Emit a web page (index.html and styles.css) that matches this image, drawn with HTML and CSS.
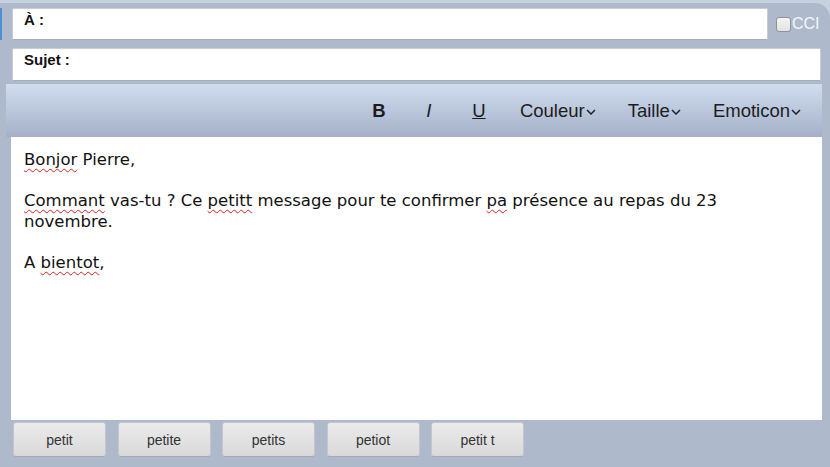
FILE: index.html
```html
<!DOCTYPE html>
<html lang="fr">
<head>
<meta charset="utf-8">
<title>Message</title>
<link rel="stylesheet" href="styles.css">
</head>
<body>
<div class="frame">
  <div class="panel">
    <div class="row row-to">
      <span class="focusbar"></span>
      <div class="field field-to"><span class="label">À :</span></div>
      <label class="cci"><span class="check"></span><span class="cci-text">CCI</span></label>
    </div>
    <div class="row row-subject">
      <div class="field field-subject"><span class="label">Sujet :</span></div>
    </div>
    <div class="toolbar">
      <span class="tool tool-b">B</span>
      <span class="tool tool-i">I</span>
      <span class="tool tool-u">U</span>
      <span class="tool menu">Couleur<svg class="chev" viewBox="0 0 10 6" width="10" height="6"><polyline points="1,1 5,5 9,1" fill="none" stroke="#222" stroke-width="1.5"/></svg></span>
      <span class="tool menu">Taille<svg class="chev" viewBox="0 0 10 6" width="10" height="6"><polyline points="1,1 5,5 9,1" fill="none" stroke="#222" stroke-width="1.5"/></svg></span>
      <span class="tool menu">Emoticon<svg class="chev" viewBox="0 0 10 6" width="10" height="6"><polyline points="1,1 5,5 9,1" fill="none" stroke="#222" stroke-width="1.5"/></svg></span>
    </div>
    <div class="editor">
      <p><span class="err">Bonjor</span> Pierre,</p>
      <p><span class="err">Commant</span> vas-tu ? Ce <span class="err">petitt</span> message pour te confirmer <span class="err">pa</span> présence au repas du 23 novembre.</p>
      <p>A <span class="err">bientot</span>,</p>
    </div>
    <div class="suggestions">
      <button class="sugg">petit</button>
      <button class="sugg">petite</button>
      <button class="sugg">petits</button>
      <button class="sugg">petiot</button>
      <button class="sugg">petit t</button>
    </div>
  </div>
</div>
</body>
</html>
```
FILE: styles.css
```css
html, body {
  margin: 0;
  padding: 0;
}
body {
  width: 830px;
  height: 467px;
  overflow: hidden;
  font-family: "Liberation Sans", Arial, sans-serif;
}
.frame {
  background: #c7d1df;
  height: 467px;
  padding-top: 3px;
  box-sizing: border-box;
}
.panel {
  background: #aebacb;
  height: 464px;
  border-top-right-radius: 15px;
  padding-top: 5px;
  box-sizing: border-box;
}
.row {
  display: flex;
  align-items: center;
}
.focusbar {
  width: 2px;
  height: 32px;
  background: #4a8fd8;
  margin-right: 10px;
}
.field {
  background: #fff;
  border: 1px solid #c9ccd0;
  border-bottom-color: #a9adb3;
  border-radius: 2px;
  box-sizing: border-box;
  padding: 2px 11px;
}
.field-to {
  width: 756px;
  height: 32px;
}
.row-subject {
  margin-top: 8px;
  padding-left: 12px;
}
.field-subject {
  width: 809px;
  height: 33px;
}
.label {
  font-weight: bold;
  font-size: 15px;
  color: #111;
}
.cci {
  display: flex;
  align-items: center;
  margin-left: 8px;
}
.check {
  width: 13px;
  height: 13px;
  border: 1px solid #8f9399;
  border-radius: 3px;
  background: linear-gradient(#f4f4f4, #e2e2e2);
}
.cci-text {
  color: #f4f6f8;
  font-size: 16px;
  margin-left: 1px;
}
.toolbar {
  margin: 3px 8px 0 6px;
  height: 53px;
  background: linear-gradient(#d1ddef, #a3b0c8);
  display: flex;
  justify-content: flex-end;
  align-items: center;
  padding-right: 5px;
  font-size: 18.5px;
  color: #1c1c1c;
}
.tool {
  display: flex;
  align-items: center;
  justify-content: center;
}
.tool-b, .tool-i, .tool-u {
  width: 50px;
}
.tool-b { font-weight: bold; }
.tool-i { font-style: italic; }
.tool-u { text-decoration: underline; }
.menu {
  padding: 0 16px;
}
.chev {
  margin-left: 1px;
  margin-top: 2px;
}
.editor {
  margin: 0 8px 0 11px;
  height: 283px;
  background: #fff;
  box-sizing: border-box;
  padding: 12px 30px 10px 13px;
  font-family: "DejaVu Sans", Verdana, sans-serif;
  font-size: 16.5px;
  line-height: 21px;
  color: #111;
}
.editor p {
  margin: 0 0 20px 0;
}
.err {
  text-decoration: underline wavy #e02020;
  text-decoration-thickness: 1px;
  text-underline-offset: 3px;
}
.suggestions {
  display: flex;
  gap: 11.5px;
  padding: 2px 0 0 13px;
}
.sugg {
  width: 93px;
  height: 35px;
  margin: 0;
  font-family: "Liberation Sans", Arial, sans-serif;
  font-size: 14px;
  color: #333;
  background: linear-gradient(#ebebeb, #d9d9d9);
  border: 1px solid #c3c6ca;
  border-bottom-color: #a8abb0;
  border-radius: 3px;
}
```
